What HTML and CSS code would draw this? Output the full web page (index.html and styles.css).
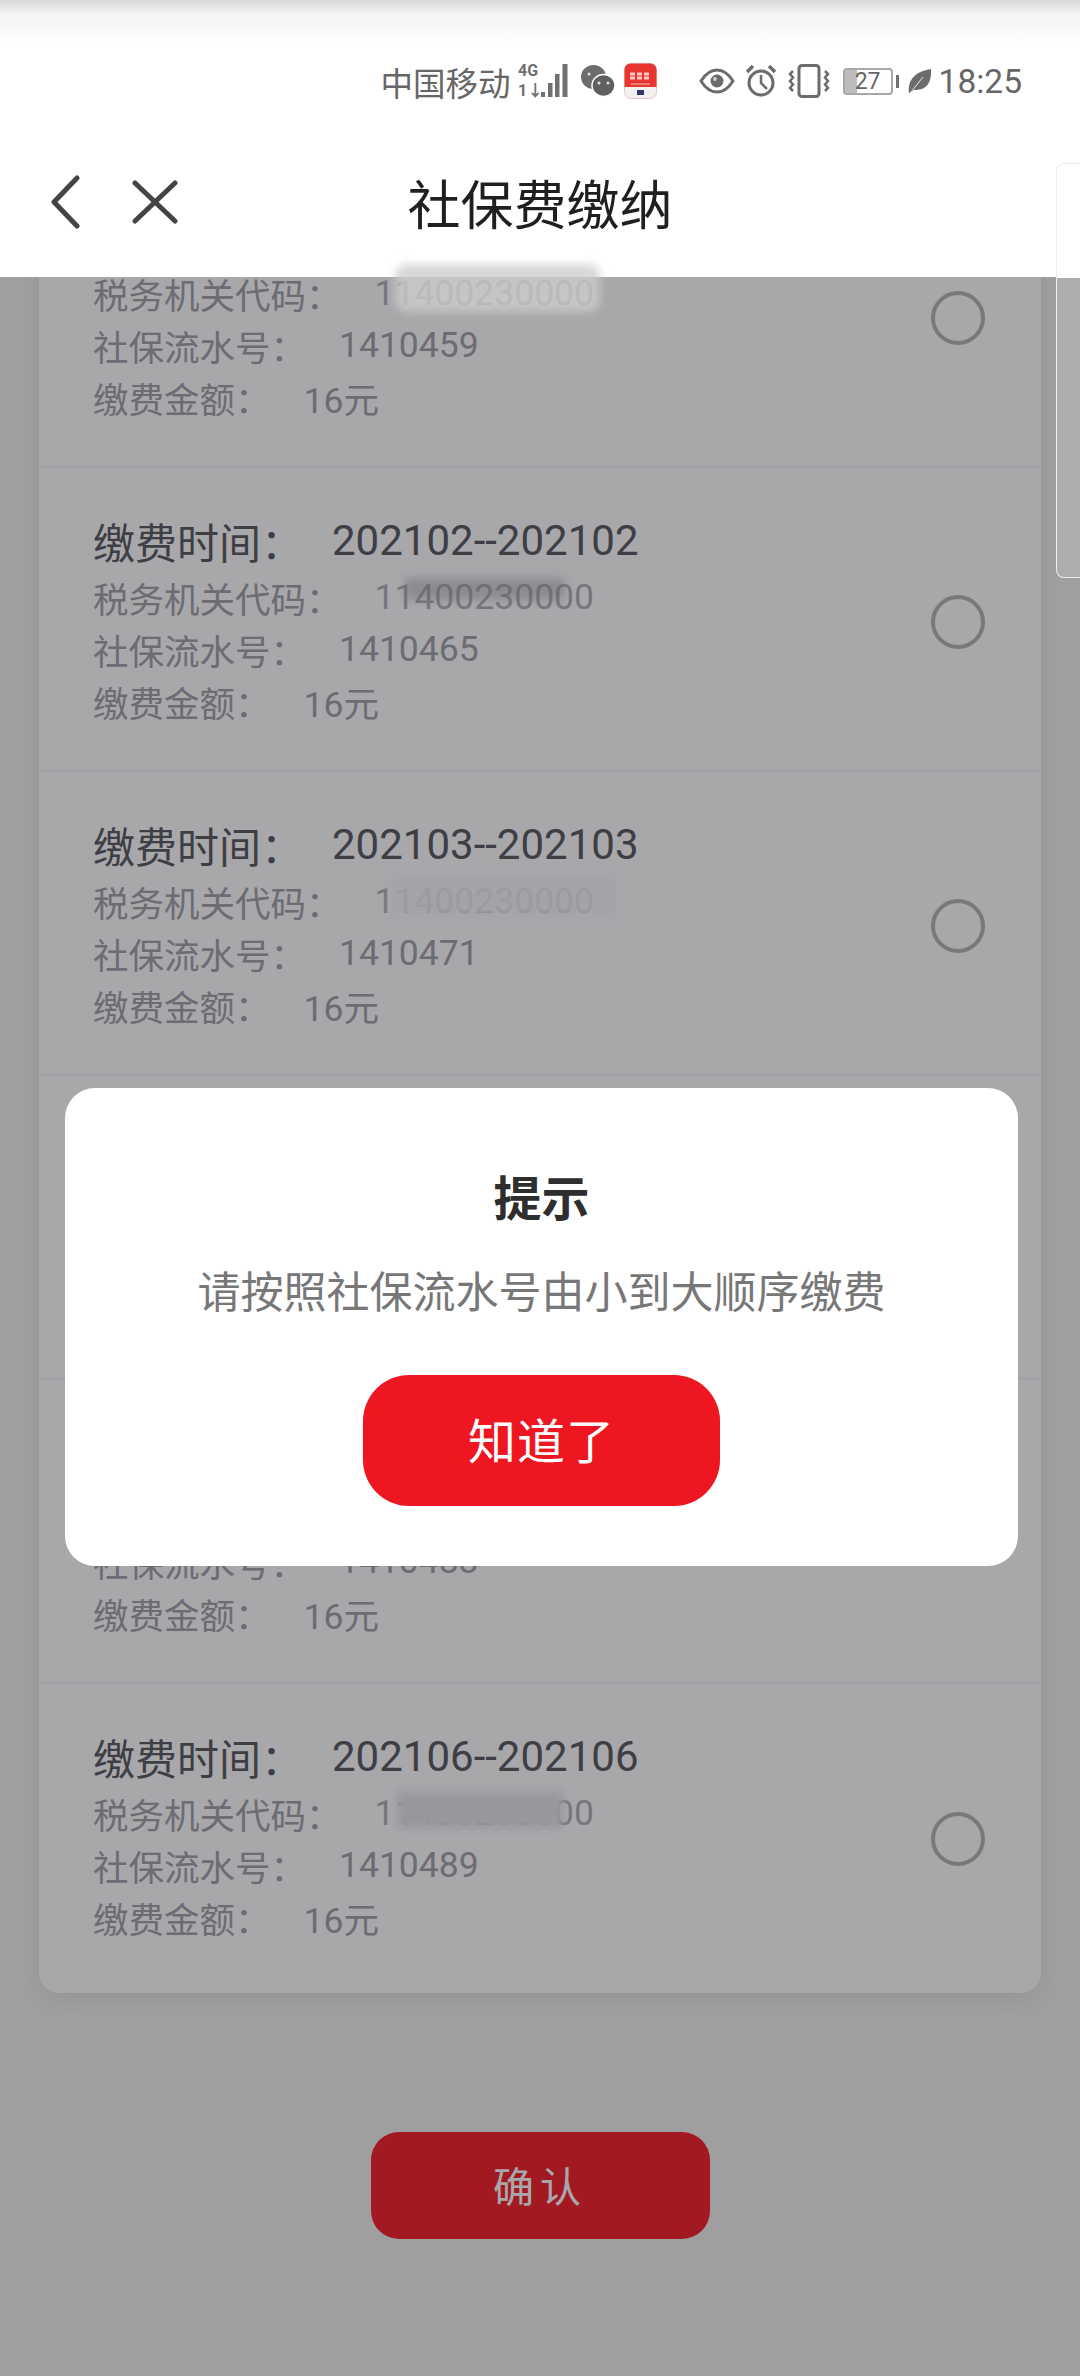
FILE: index.html
```html
<!DOCTYPE html>
<html lang="zh-CN">
  <head>
    <meta charset="UTF-8" />
    <meta name="viewport" content="width=device-width, initial-scale=1.0" />
    <title>社保费缴纳</title>
    <link rel="stylesheet" href="styles.css">
  </head>
  <body>
    <div class="page">
      <header class="topbar">
        <div class="status">
          <span class="carrier">中国移动</span>
          <svg class="ico-signal" width="52" height="40" viewBox="0 0 52 40">
            <text x="0" y="15" class="mini">4G</text>
            <text x="0" y="35" class="mini">1↓</text>
            <g fill="#707070">
              <rect x="23" y="31" width="4" height="5"/>
              <rect x="30" y="22" width="4.500" height="14"/>
              <rect x="37" y="13" width="4.500" height="23"/>
              <rect x="44.500" y="3" width="5" height="33"/>
            </g>
          </svg>
          <svg class="ico-wechat" width="34" height="32" viewBox="0 0 34 32">
            <ellipse cx="12.500" cy="12" rx="12.500" ry="12" fill="#6c6c6c"/>
            <ellipse cx="22.500" cy="20.500" rx="11.500" ry="11" fill="#606060" stroke="#fff" stroke-width="1.500"/>
            <circle cx="8" cy="9" r="1.600" fill="#ddd"/>
            <circle cx="18" cy="18" r="1.600" fill="#ddd"/>
            <circle cx="27" cy="18" r="1.600" fill="#ddd"/>
          </svg>
          <svg class="ico-app" width="33" height="36" viewBox="0 0 33 36">
            <rect x="0.500" y="0.500" width="32" height="35" rx="6" fill="#f3f0f0" stroke="#e8c9c6"/>
            <path d="M0.500 6.500a6 6 0 0 1 6-6h20a6 6 0 0 1 6 6V24H0.500z" fill="#e8352f"/>
            <path d="M6 11h21M6 15h21" stroke="#f8c9c2" stroke-width="3" stroke-dasharray="5 2"/>
            <path d="M7 21h19" stroke="#f29a92" stroke-width="1.500"/>
            <rect x="13" y="27" width="7" height="5" fill="#2b3a6b"/>
          </svg>
          <svg class="ico-eye" width="36" height="26" viewBox="0 0 36 26">
            <path d="M2 13C7 5 12 2 18 2s11 3 16 11c-5 8-10 11-16 11S7 21 2 13z" fill="none" stroke="#6c6c6c" stroke-width="3"/>
            <circle cx="18" cy="13" r="6.500" fill="#6c6c6c"/>
            <circle cx="16" cy="11" r="2" fill="#ccc"/>
          </svg>
          <svg class="ico-alarm" width="32" height="34" viewBox="0 0 32 34">
            <circle cx="16" cy="19" r="12" fill="none" stroke="#6c6c6c" stroke-width="3"/>
            <path d="M16 11v8l6 6" fill="none" stroke="#6c6c6c" stroke-width="2.500"/>
            <path d="M2 8l6-6M30 8l-6-6" stroke="#6c6c6c" stroke-width="3.500"/>
          </svg>
          <svg class="ico-vibrate" width="42" height="34" viewBox="0 0 42 34">
            <rect x="11" y="1.500" width="20" height="31" rx="3" fill="none" stroke="#6c6c6c" stroke-width="3"/>
            <path d="M5 7l-3 3 3 3.500-3 3.500 3 3.500-3 3.500 3 3M37 7l3 3-3 3.500 3 3.500-3 3.500 3 3.500-3 3" fill="none" stroke="#6c6c6c" stroke-width="2.500"/>
          </svg>
          <span class="battery"><span class="battery-level"></span><span class="battery-num">27</span></span>
          <span class="battery-nub"></span>
          <svg class="ico-leaf" width="24" height="26" viewBox="0 0 24 26">
            <path d="M1 25C-1 12 8 3 23 1c1 13-4 22-17 21z" fill="#6c6c6c"/>
            <path d="M3 24L15 9" stroke="#e8e8e8" stroke-width="1"/>
          </svg>
          <span class="clock">18:25</span>
        </div>
        <nav class="nav">
          <div class="nav-icons">
            <svg width="30" height="54" viewBox="0 0 30 54">
              <path d="M27 3L4 27l23 24" fill="none" stroke="#444" stroke-width="5" stroke-linecap="round" stroke-linejoin="round"/>
            </svg>
            <svg width="46" height="44" viewBox="0 0 46 44">
              <path d="M3 3l40 38M43 3L3 41" fill="none" stroke="#444" stroke-width="5" stroke-linecap="round"/>
            </svg>
          </div>
          <h1 class="nav-title">社保费缴纳</h1>
        </nav>
        <div class="smear smear-top"></div>
        <div class="scrollbar"></div>
      </header>

      <main class="content">
        <section class="card-list">
          <div class="row">
            <div class="info">
              <div class="line-title"><span>缴费时间：</span><span class="val">202101--202101</span></div>
              <div class="line"><span>税务机关代码：</span><span class="val code">11400230000</span></div>
              <div class="line"><span>社保流水号：</span><span class="val">1410459</span></div>
              <div class="line"><span>缴费金额：</span><span class="val">16元</span></div>
            </div>
            <span class="radio"></span>
          </div>
          <div class="row">
            <div class="info">
              <div class="line-title"><span>缴费时间：</span><span class="val">202102--202102</span></div>
              <div class="line"><span>税务机关代码：</span><span class="val code">11400230000<i class="smear smear-2"></i></span></div>
              <div class="line"><span>社保流水号：</span><span class="val">1410465</span></div>
              <div class="line"><span>缴费金额：</span><span class="val">16元</span></div>
            </div>
            <span class="radio"></span>
          </div>
          <div class="row">
            <div class="info">
              <div class="line-title"><span>缴费时间：</span><span class="val">202103--202103</span></div>
              <div class="line"><span>税务机关代码：</span><span class="val code">11400230000<i class="smear smear-3"></i></span></div>
              <div class="line"><span>社保流水号：</span><span class="val">1410471</span></div>
              <div class="line"><span>缴费金额：</span><span class="val">16元</span></div>
            </div>
            <span class="radio"></span>
          </div>
          <div class="row">
            <div class="info">
              <div class="line-title"><span>缴费时间：</span><span class="val">202104--202104</span></div>
              <div class="line"><span>税务机关代码：</span><span class="val code">11400230000</span></div>
              <div class="line"><span>社保流水号：</span><span class="val">1410477</span></div>
              <div class="line"><span>缴费金额：</span><span class="val">16元</span></div>
            </div>
            <span class="radio"></span>
          </div>
          <div class="row">
            <div class="info">
              <div class="line-title"><span>缴费时间：</span><span class="val">202105--202105</span></div>
              <div class="line"><span>税务机关代码：</span><span class="val code">11400230000</span></div>
              <div class="line"><span>社保流水号：</span><span class="val">1410483</span></div>
              <div class="line"><span>缴费金额：</span><span class="val">16元</span></div>
            </div>
            <span class="radio"></span>
          </div>
          <div class="row last">
            <div class="info">
              <div class="line-title"><span>缴费时间：</span><span class="val">202106--202106</span></div>
              <div class="line"><span>税务机关代码：</span><span class="val code">11400230000<i class="smear smear-6"></i></span></div>
              <div class="line"><span>社保流水号：</span><span class="val">1410489</span></div>
              <div class="line"><span>缴费金额：</span><span class="val">16元</span></div>
            </div>
            <span class="radio"></span>
          </div>
        </section>
        <button class="confirm">确认</button>
        <div class="dim"></div>
      </main>

      <div class="modal">
        <h2 class="modal-title">提示</h2>
        <p class="modal-text">请按照社保流水号由小到大顺序缴费</p>
        <button class="modal-btn">知道了</button>
      </div>
    </div>
  </body>
</html>
```

FILE: styles.css
```css
* {
  box-sizing: border-box;
}

body {
  margin: 0;
  font-family: Roboto, "Noto Sans CJK SC", sans-serif;
}

.page {
  position: relative;
  display: flex;
  flex-direction: column;
  width: 1080px;
  height: 2376px;
  overflow: hidden;
  background-color: #f2f2ef;
}

/* top bar stays bright above the dim layer */
.topbar {
  position: relative;
  z-index: 3;
  height: 277px;
  background: linear-gradient(#d8d8d8 0, #f4f4f4 14px, #fff 48px);
}

.status {
  display: flex;
  justify-content: flex-end;
  align-items: center;
  height: 132px;
  padding: 30px 58px 0 0;
  color: #666;
}

.carrier {
  font-size: 32.500px;
  margin-right: 7px;
}

.mini {
  font-size: 16px;
  font-weight: 700;
  fill: #707070;
}

.ico-signal {
  margin-right: 11px;
}

.ico-wechat {
  margin-right: 9px;
}

.ico-app {
  margin-right: 42px;
}

.ico-eye {
  margin-right: 10px;
}

.ico-alarm {
  margin-right: 11px;
}

.ico-vibrate {
  margin-right: 13px;
}

.battery {
  position: relative;
  display: flex;
  justify-content: center;
  align-items: center;
  width: 50px;
  height: 27px;
  border: 2px solid #a8a8a8;
  border-radius: 4px;
  font-size: 23px;
  color: #666;
}

.battery-level {
  position: absolute;
  left: 0;
  top: 0;
  bottom: 0;
  width: 27%;
  background-color: #bdbdbd;
}

.battery-num {
  position: relative;
}

.battery-nub {
  width: 3px;
  height: 13px;
  margin: 0 9px 0 3px;
  background-color: #707070;
}

.ico-leaf {
  margin-right: 7px;
}

.clock {
  font-size: 33.500px;
}

.nav {
  display: grid;
  grid-template-columns: 1fr auto 1fr;
  align-items: center;
  height: 145px;
  padding-bottom: 6px;
}

.nav-icons {
  display: flex;
  align-items: center;
  gap: 52px;
  padding-left: 50px;
}

.nav-title {
  grid-column: 2;
  margin: 0;
  font-size: 53px;
  font-weight: 400;
  color: #1f1f1f;
}

.smear {
  position: absolute;
  display: block;
  filter: blur(4px);
}

.smear-top {
  left: 395px;
  top: 264px;
  width: 205px;
  height: 48px;
  background-color: rgba(205, 205, 205, 0.78);
  border-radius: 12px;
}

.smear-2 {
  left: 30px;
  top: 2px;
  width: 160px;
  height: 22px;
  background-color: rgba(150, 150, 155, 0.4);
}

.smear-3 {
  left: 16px;
  top: -6px;
  width: 225px;
  height: 42px;
  background-color: rgba(246, 246, 250, 0.85);
}

.smear-6 {
  left: 22px;
  top: 0;
  width: 166px;
  height: 36px;
  background-color: #e6e6ea;
}

.scrollbar {
  position: absolute;
  right: 0;
  top: 163px;
  width: 24px;
  height: 415px;
  border: 1px solid #eee;
  border-right: 0;
  border-radius: 8px 0 0 8px;
  background: linear-gradient(#fff 114px, #adadb0 114px);
}

.content {
  position: relative;
  flex: 1;
  overflow: hidden;
  display: flex;
  flex-direction: column;
  align-items: center;
}

.card-list {
  width: 1002px;
  margin-top: -113px;
  background-color: #fff;
  border-radius: 20px;
  box-shadow: 0 6px 24px rgba(0, 0, 0, 0.07);
  padding-bottom: 5px;
}

.row {
  display: flex;
  justify-content: space-between;
  height: 304px;
  padding: 46px 56px 0 54px;
  border-bottom: 3px solid #f6f6f8;
}

.row.last {
  border-bottom: 0;
}

.info {
  color: #a4a4aa;
  font-size: 35.500px;
}

.line-title {
  display: flex;
  height: 53px;
  margin-bottom: 4px;
  align-items: center;
  font-size: 42px;
  color: #5e5e64;
}

.line {
  display: flex;
  height: 52px;
  align-items: center;
}

.val {
  margin-left: 33px;
}

.line-title .val {
  margin-left: 29px;
}

.code {
  position: relative;
  color: #b4b4ba;
}

.radio {
  flex: none;
  align-self: center;
  width: 54px;
  height: 54px;
  margin-top: -40px;
  border: 4px solid #b8b8b8;
  border-radius: 50%;
}

.confirm {
  width: 339px;
  height: 107px;
  margin-top: 139px;
  padding: 0 0 4px;
  border: 0;
  border-radius: 28px;
  background-color: #f7262f;
  color: #fff;
  font-family: inherit;
  font-size: 41px;
  letter-spacing: 6px;
}

.dim {
  position: absolute;
  inset: 0;
  background-color: rgba(0, 0, 8, 0.34);
}

.modal {
  position: absolute;
  z-index: 4;
  left: 65px;
  top: 1088px;
  display: flex;
  flex-direction: column;
  align-items: center;
  width: 953px;
  height: 478px;
  padding-top: 82px;
  background-color: #fff;
  border-radius: 30px;
}

.modal-title {
  margin: 0;
  font-size: 48px;
  line-height: 60px;
  font-weight: 700;
  color: #2e2e2e;
}

.modal-text {
  margin: 33px 0 0;
  font-size: 43px;
  line-height: 60px;
  color: #777;
}

.modal-btn {
  width: 357px;
  height: 131px;
  margin-top: 52px;
  padding: 0 0 5px;
  border: 0;
  border-radius: 46px;
  background-color: #ee1620;
  color: #fff;
  font-family: inherit;
  font-size: 48px;
  letter-spacing: 1px;
}
```
